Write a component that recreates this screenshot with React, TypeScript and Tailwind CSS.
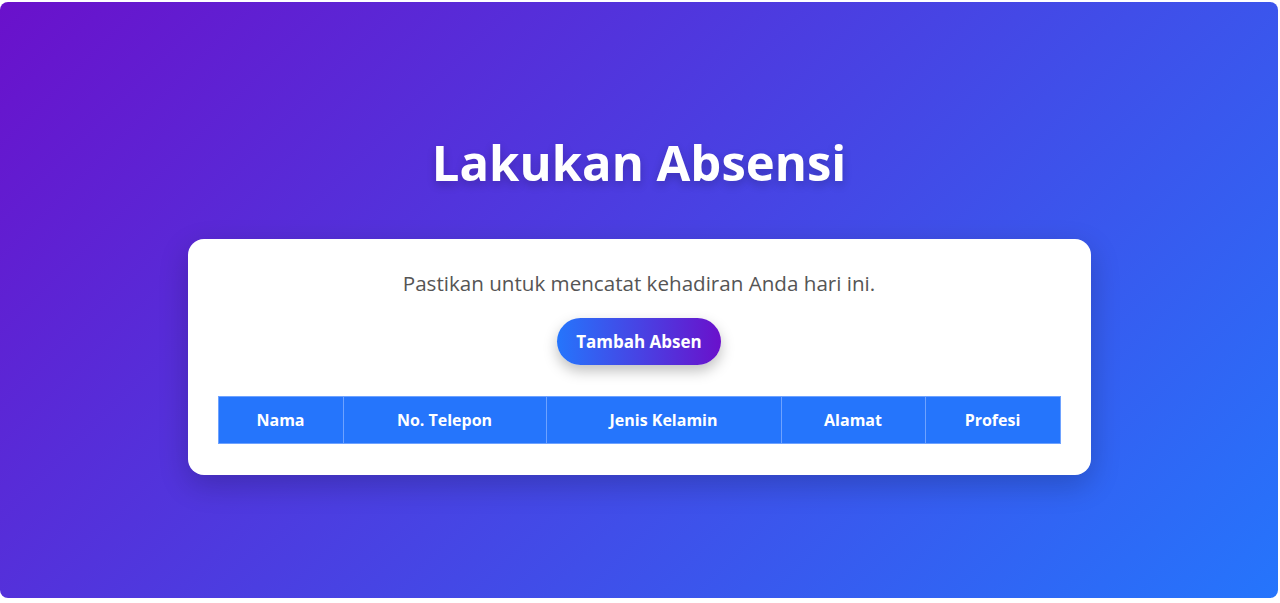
export default function App() {
  const columns = [
    { label: "Nama", width: "w-[125px]" },
    { label: "No. Telepon", width: "w-[203px]" },
    { label: "Jenis Kelamin", width: "w-[235px]" },
    { label: "Alamat", width: "w-[144px]" },
    { label: "Profesi", width: "w-[135px]" },
  ];

  return (
    <div className="h-[603px] w-full bg-white font-['Open_Sans',sans-serif]">
      <div className="mt-[2px] flex h-[596px] w-[1278px] flex-col items-center justify-center rounded-lg bg-[linear-gradient(135deg,#6a11cb,#2575fc)] pt-[8px]">
        <h1 className="mb-[47px] text-[49px] font-bold leading-[1.2] text-white [text-shadow:0_4px_10px_rgba(0,0,0,0.2)]">
          Lakukan Absensi
        </h1>

        {/* Card */}
        <div className="w-[903px] rounded-2xl bg-white px-[30px] pb-[31px] pt-[31px] shadow-[0_10px_30px_rgba(0,0,0,0.2)]">
          <p className="text-center text-[20.6px] leading-[27px] text-[#555]">
            Pastikan untuk mencatat kehadiran Anda hari ini.
          </p>

          <div className="mt-[21px] flex justify-center">
            <button className="h-[47px] w-[164px] rounded-full bg-[linear-gradient(90deg,#2575fc,#6a11cb)] text-[17px] font-bold text-white shadow-[0_6px_14px_rgba(0,0,0,0.25)]">
              Tambah Absen
            </button>
          </div>

          <table className="mt-[31px] w-full border-collapse">
            <thead>
              <tr>
                {columns.map((c) => (
                  <th
                    key={c.label}
                    className={`${c.width} h-[47px] border border-[#6ea2ff] bg-[#2575fc] text-center text-[16px] font-bold text-white`}
                  >
                    {c.label}
                  </th>
                ))}
              </tr>
            </thead>
          </table>
        </div>
      </div>
    </div>
  );
}
